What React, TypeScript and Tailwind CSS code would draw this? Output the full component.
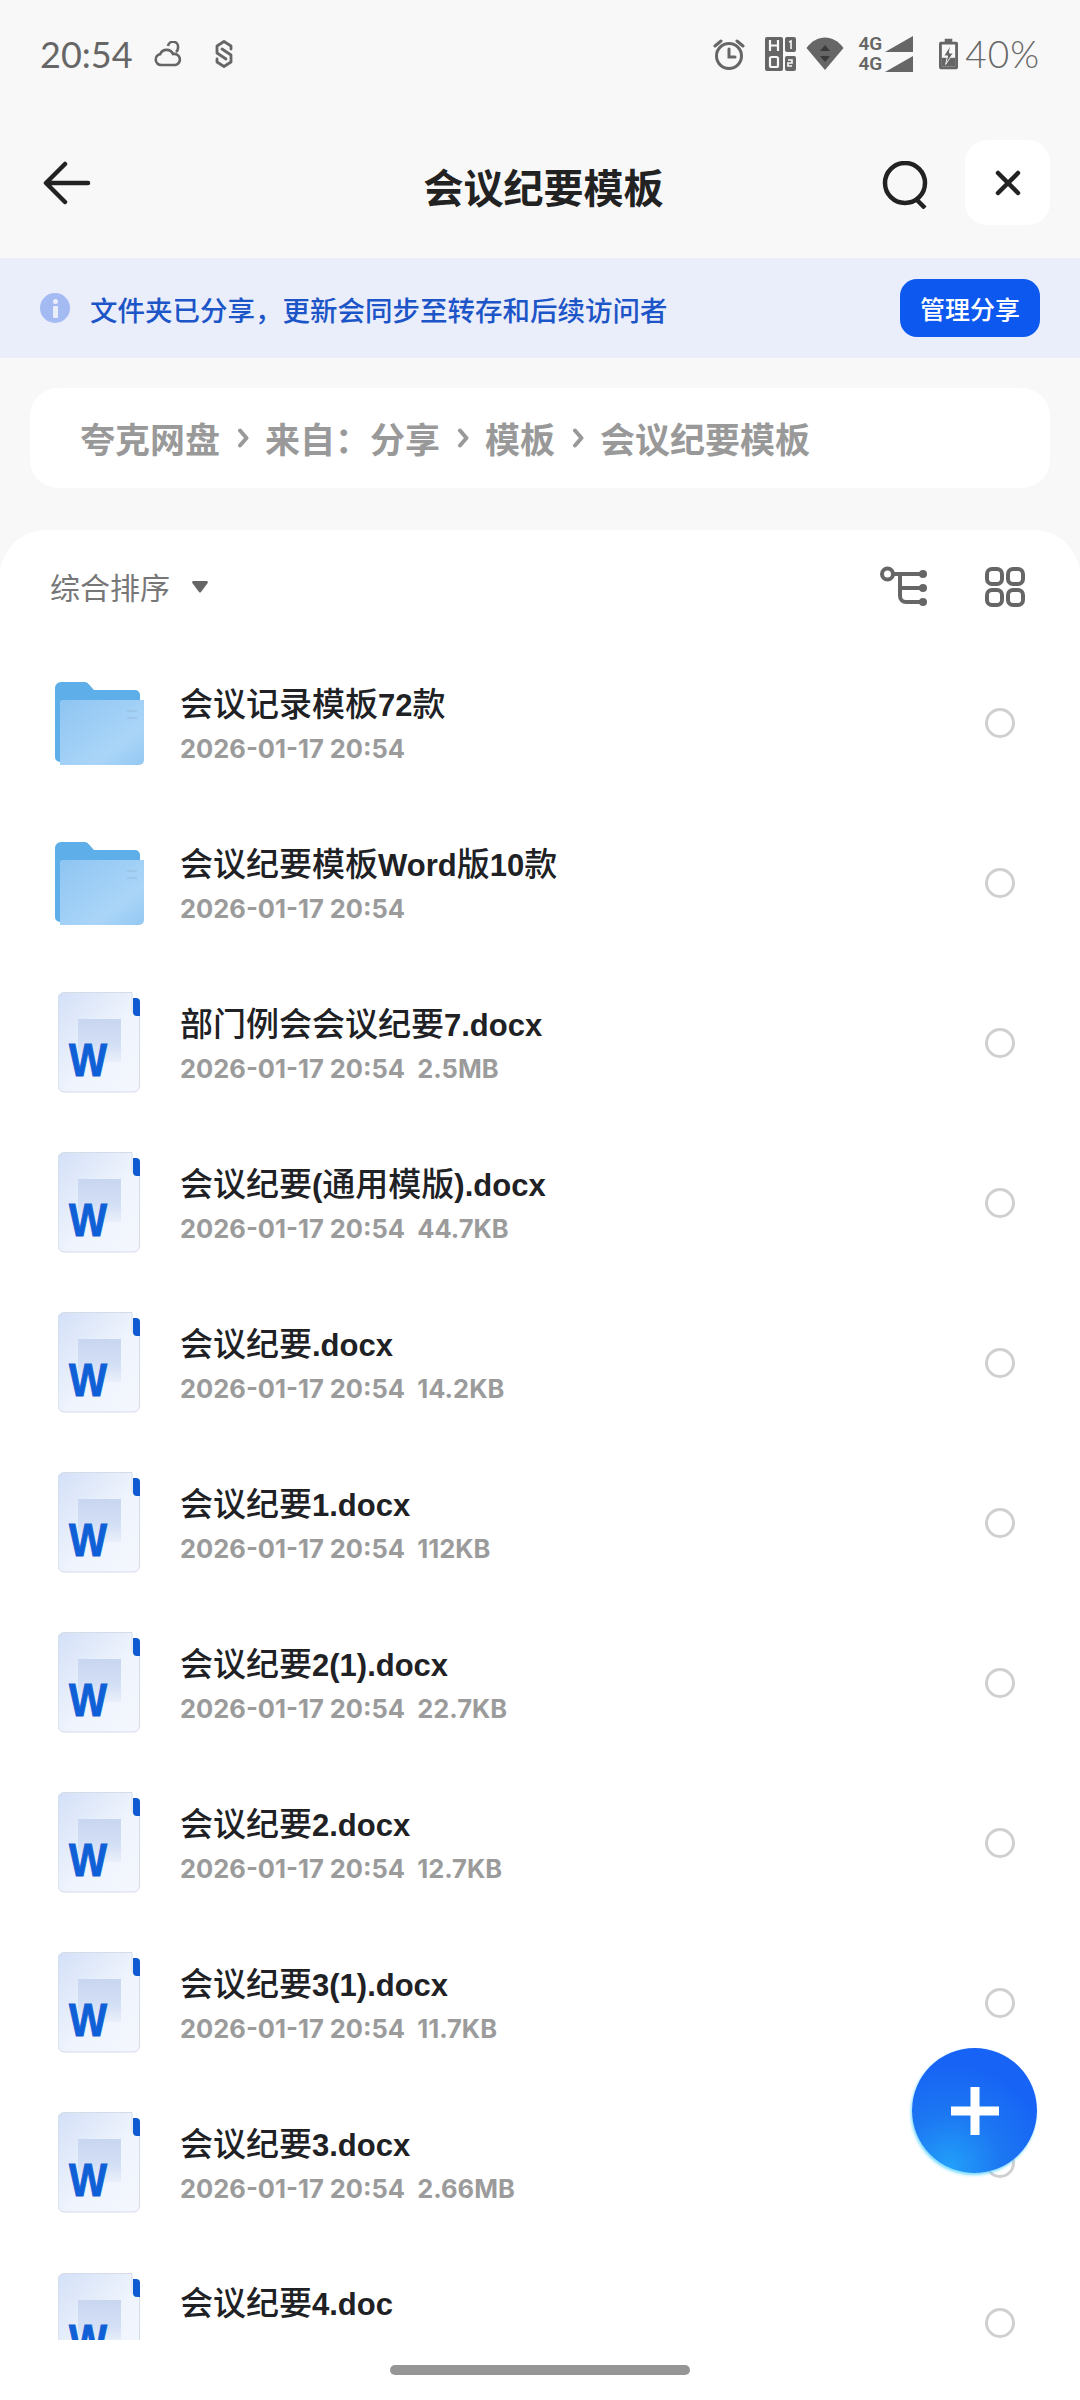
const cjk = '"Noto Sans CJK SC","Noto Sans",sans-serif';

function WordIcon() {
  return (
    <svg width="84" height="102" viewBox="0 0 84 102" className="shrink-0">
      <defs>
        <linearGradient id="wg" x1="0" y1="0" x2="1" y2="1">
          <stop offset="0" stopColor="#d3e0f7" />
          <stop offset="0.55" stopColor="#eff4fd" />
          <stop offset="1" stopColor="#f4f7fd" />
        </linearGradient>
        <linearGradient id="wi" x1="0" y1="0" x2="0" y2="1">
          <stop offset="0" stopColor="#c9d6f0" />
          <stop offset="0.6" stopColor="#d3dff5" />
          <stop offset="1" stopColor="#eaf0fb" />
        </linearGradient>
      </defs>
      <path d="M6 .5H74V20H81.500V94a6 6 0 0 1-6 6H6a6 6 0 0 1-6-6V6.500a6 6 0 0 1 6-6Z" fill="url(#wg)" stroke="#d5dce8" strokeWidth="1" />
      <rect x="20" y="27" width="43" height="43" fill="url(#wi)" />
      <path d="M75 6h3a4 4 0 0 1 4 4v14h-3a4 4 0 0 1-4-4Z" fill="#0f5ad2" />
      <text x="11" y="84" fontFamily="Liberation Sans, sans-serif" fontWeight="700" fontSize="46" fill="#0f5fd6" stroke="#0f5fd6" strokeWidth="1" textLength="38" lengthAdjust="spacingAndGlyphs">W</text>
    </svg>
  );
}

function FolderIcon() {
  return (
    <svg width="90" height="84" viewBox="0 0 90 84" className="shrink-0">
      <defs>
        <linearGradient id="fg" x1="0" y1="0" x2="1" y2="1">
          <stop offset="0" stopColor="#8fc5f2" />
          <stop offset="0.7" stopColor="#aad5f8" />
          <stop offset="1" stopColor="#93c8f2" />
        </linearGradient>
      </defs>
      <path d="M6 0H30a5 5 0 0 1 4 2.500L39 8H80a5 5 0 0 1 5 5V80H5a5 5 0 0 1-5-5V6a6 6 0 0 1 6-6Z" fill="#5eaeea" />
      <path d="M5 21a3 3 0 0 1 3-3H89V78a5 5 0 0 1-5 5H5Z" fill="url(#fg)" />
      <rect x="72" y="28" width="10" height="2" fill="#9cc6ea" />
      <rect x="72" y="35" width="10" height="2" fill="#9cc6ea" />
    </svg>
  );
}

function Name({ text }: { text: string }) {
  const parts = text.split(/([\x20-\x7e]+)/).filter(Boolean);
  return (
    <>
      {parts.map((p, i) =>
        /^[\x20-\x7e]+$/.test(p) ? (
          <span key={i} className="font-bold text-[31px] font-['Liberation_Sans',sans-serif]">{p}</span>
        ) : (
          <span key={i}>{p}</span>
        ),
      )}
    </>
  );
}

type Item = { name: string; size?: string; kind: 'folder' | 'word' };
const items: Item[] = [
  { name: '会议记录模板72款', kind: 'folder' },
  { name: '会议纪要模板Word版10款', kind: 'folder' },
  { name: '部门例会会议纪要7.docx', size: '2.5MB', kind: 'word' },
  { name: '会议纪要(通用模版).docx', size: '44.7KB', kind: 'word' },
  { name: '会议纪要.docx', size: '14.2KB', kind: 'word' },
  { name: '会议纪要1.docx', size: '112KB', kind: 'word' },
  { name: '会议纪要2(1).docx', size: '22.7KB', kind: 'word' },
  { name: '会议纪要2.docx', size: '12.7KB', kind: 'word' },
  { name: '会议纪要3(1).docx', size: '11.7KB', kind: 'word' },
  { name: '会议纪要3.docx', size: '2.66MB', kind: 'word' },
];

function Row({ item }: { item: Item }) {
  return (
    <div className="h-[160px] flex items-center pl-[55px] pr-[65px]">
      <div className={item.kind === 'folder' ? 'w-[125px] shrink-0 flex items-center pt-[2px]' : 'w-[125px] shrink-0 flex items-center'}>
        {item.kind === 'folder' ? <FolderIcon /> : <div className="ml-[3px]"><WordIcon /></div>}
      </div>
      <div className="flex-1 min-w-0 flex flex-col pt-[5px]">
        <div className="h-[44px] leading-[44px] text-[33px] font-medium text-[#202124]"><Name text={item.name} /></div>
        <div className="h-[44px] mt-[3px] leading-[44px] text-[25.500px] font-bold text-[#9b9b9b] whitespace-pre font-['Inter',sans-serif]">
          {'2026-01-17 20:54' + (item.size ? '  ' + item.size : '')}
        </div>
      </div>
      <div className="w-[30px] h-[30px] rounded-full border-[3px] border-[#d0d0d0] shrink-0" />
    </div>
  );
}

function Chevron() {
  return (
    <svg width="12" height="20" viewBox="0 0 12 20" fill="none" stroke="#999" strokeWidth="4" strokeLinecap="round" strokeLinejoin="round">
      <path d="M3 2.500l6.500 7.500-6.500 7.500" />
    </svg>
  );
}

export default function App() {
  return (
    <div className="w-[1080px] h-[2400px] bg-[#f8f8f8] overflow-hidden relative flex flex-col" style={{ fontFamily: cjk }}>
      {/* status bar */}
      <div className="h-[107px] flex items-center pl-[40px] pr-[40px] text-[#666] shrink-0">
        <span className="text-[36px] font-['Lato',sans-serif] leading-none">20:54</span>
        <svg width="28" height="26" viewBox="0 0 28 26" className="ml-[21px]" fill="none" stroke="#666" strokeWidth="2.600">
          <path d="M7 24a5.500 5.500 0 0 1-.8-10.900A7 7 0 0 1 19 13a5.500 5.500 0 0 1 2.500 11Z" />
          <path d="M14 5A5 5 0 0 1 24 6.500a5 5 0 0 1-2 4.500" />
        </svg>
        <svg width="24" height="30" viewBox="0 0 24 30" className="ml-[30px]" fill="none" stroke="#666" strokeWidth="2.800" strokeLinejoin="round" strokeLinecap="round">
          <path d="M19 10V7L12 2.500 5 7v7l9 6" />
          <path d="M5 20v3l7 4.500 7-4.500v-7l-9-6" />
        </svg>
        <div className="flex-1" />
        <svg width="32" height="32" viewBox="0 0 32 32" fill="none" stroke="#666" strokeWidth="3" className="mr-[20px]">
          <circle cx="16" cy="18" r="12.500" />
          <path d="M16 11v8h6M2 8l6-5M30 8l-6-5" strokeLinecap="round" />
        </svg>
        <svg width="31" height="34" viewBox="0 0 31 34" className="mr-[10px]">
          <rect x="0" y="0" width="18" height="34" rx="2" fill="#666" />
          <rect x="20" y="0" width="11" height="15" rx="2" fill="#666" />
          <rect x="20" y="19" width="11" height="15" rx="2" fill="#666" />
          <path d="M5 3v11M13 3v11M5 8.500h8" stroke="#f8f8f8" strokeWidth="2.200" fill="none" />
          <rect x="5" y="20" width="8" height="10" rx="1.500" stroke="#f8f8f8" strokeWidth="2.200" fill="none" />
          <path d="M24 5l2-1v8" stroke="#f8f8f8" strokeWidth="1.600" fill="none" />
          <path d="M23 23h4v3h-4v3h4" stroke="#f8f8f8" strokeWidth="1.600" fill="none" />
        </svg>
        <svg width="38" height="33" viewBox="0 0 37 33" className="mr-[14px]">
          <path d="M0 11C10 -3 27 -3 37 11L18.500 33Z" fill="#666" />
          <path d="M18.500 8l5 6h-10Z M18.500 25l5-6h-10Z" fill="#3a3a3a" />
        </svg>
        <div className="flex flex-col text-[19px] leading-[19.500px] font-semibold font-['Roboto',sans-serif] mr-[3px]">
          <span>4G</span>
          <span>4G</span>
        </div>
        <svg width="28" height="36" viewBox="0 0 28 36" className="mr-[26px]">
          <path d="M0 16 28 0v16Z M0 36 28 20v16Z" fill="#666" />
        </svg>
        <svg width="19" height="32" viewBox="0 0 20 32" className="mr-[7px]">
          <path d="M6 0h8v3h4a2 2 0 0 1 2 2v25a2 2 0 0 1-2 2H2a2 2 0 0 1-2-2V5a2 2 0 0 1 2-2h4Z" fill="#666" />
          <rect x="3" y="6" width="14" height="23" fill="#f8f8f8" />
          <rect x="3" y="20" width="14" height="9" fill="#666" />
          <path d="M12 7 5 18h4l-2 9 8-12h-4Z" fill="#666" stroke="#f8f8f8" strokeWidth="1" />
        </svg>
        <span className="text-[37px] font-['Lato',sans-serif] font-light leading-none tracking-[1px]">40%</span>
      </div>

      {/* title bar */}
      <div className="h-[151px] shrink-0 relative flex items-center justify-center pl-[7px] pt-[6px]">
        <svg width="48" height="44" viewBox="0 0 48 44" fill="none" stroke="#222" strokeWidth="4.500" strokeLinecap="round" strokeLinejoin="round" className="absolute left-[43px] top-[54px]">
          <path d="M45 22H4M22 3 3 22l19 19" />
        </svg>
        <span className="text-[40px] font-bold text-[#222] leading-none">会议纪要模板</span>
        <svg width="48" height="48" viewBox="0 0 48 48" fill="none" stroke="#222" strokeWidth="4.500" className="absolute left-[882px] top-[54px]">
          <circle cx="23" cy="22" r="20" />
          <path d="M34 38l9 9" />
        </svg>
        <div className="absolute left-[965px] top-[33px] w-[85px] h-[85px] rounded-[22px] bg-white flex items-center justify-center">
          <svg width="26" height="26" viewBox="0 0 26 26" fill="none" stroke="#222" strokeWidth="4.500" strokeLinecap="round">
            <path d="M3 3l20 20M23 3 3 23" />
          </svg>
        </div>
      </div>

      {/* share banner */}
      <div className="h-[100px] shrink-0 bg-[#eaedfa] flex items-center pl-[40px] pr-[40px]">
        <div className="w-[30px] h-[30px] rounded-full bg-[#a3baf3] flex items-center justify-center">
          <div className="flex flex-col items-center gap-[2px]">
            <div className="w-[5px] h-[5px] rounded-full bg-[#eaedfa]" />
            <div className="w-[5px] h-[12px] rounded-[1px] bg-[#eaedfa]" />
          </div>
        </div>
        <span className="ml-[20px] pt-[3px] text-[27.500px] font-medium text-[#1c55c7] flex-1">文件夹已分享，更新会同步至转存和后续访问者</span>
        <div className="w-[140px] h-[58px] pt-[2px] rounded-[17px] bg-[#0d58ef] text-white text-[25px] font-medium flex items-center justify-center">管理分享</div>
      </div>

      {/* breadcrumb */}
      <div className="h-[100px] shrink-0 mt-[30px] mx-[30px] rounded-[28px] bg-white flex items-center pl-[50px] text-[35px] font-bold text-[#999] gap-[16.500px]">
        <span>夸克网盘</span>
        <Chevron />
        <span>来自：分享</span>
        <Chevron />
        <span>模板</span>
        <Chevron />
        <span>会议纪要模板</span>
      </div>

      {/* list */}
      <div className="mt-[42px] flex-1 rounded-t-[46px] bg-white flex flex-col">
        <div className="h-[113px] flex items-center pl-[50px] pr-[55px] shrink-0">
          <span className="text-[30px] text-[#777]">综合排序</span>
          <svg width="16" height="12" viewBox="0 0 16 12" className="ml-[22px]"><path d="M1.500 0h13a1.300 1.300 0 0 1 1 2.200L9 11a1.300 1.300 0 0 1-2 0L.5 2.200A1.300 1.300 0 0 1 1.500 0Z" fill="#666" /></svg>
          <div className="flex-1" />
          <svg width="48" height="42" viewBox="0 0 48 42" fill="none" stroke="#666" strokeWidth="4" className="mr-[57px]">
            <circle cx="7.500" cy="8" r="5.500" />
            <path d="M13 8H43M20 8V30a6 6 0 0 0 6 6H43M20 22H43" />
            <circle cx="43" cy="8" r="4" fill="#666" stroke="none" />
            <circle cx="43" cy="22" r="4" fill="#666" stroke="none" />
            <circle cx="43" cy="36" r="4" fill="#666" stroke="none" />
          </svg>
          <svg width="40" height="40" viewBox="0 0 40 40" fill="none" stroke="#666" strokeWidth="4">
            <rect x="2" y="2" width="15" height="15" rx="5" />
            <rect x="23" y="2" width="15" height="15" rx="5" />
            <rect x="2" y="23" width="15" height="15" rx="5" />
            <rect x="23" y="23" width="15" height="15" rx="5" />
          </svg>
        </div>
        <div className="flex flex-col">
          {items.map((it) => <Row key={it.name} item={it} />)}
        </div>
        <div className="h-[97px] overflow-hidden flex items-start pl-[58px] pr-[65px] shrink-0">
          <div className="w-[122px] h-[97px] shrink-0 overflow-hidden pt-[30px]"><WordIcon /></div>
          <div className="text-[33px] font-medium text-[#202124] leading-[44px] mt-[36px] flex-1"><Name text="会议纪要4.doc" /></div>
          <div className="w-[30px] h-[30px] rounded-full border-[3px] border-[#d0d0d0] shrink-0 mt-[65px]" />
        </div>
        <div className="flex-1 flex items-start justify-center pt-[25px]">
          <div className="w-[300px] h-[10px] rounded-full bg-[#969696]" />
        </div>
      </div>

      {/* FAB */}
      <div className="absolute left-[912px] top-[2048px] w-[125px] h-[125px] rounded-full bg-[radial-gradient(circle_at_30%_95%,#22a0fa_0%,#1c78f2_35%,#1763f5_70%)] shadow-[-1px_2px_3px_rgba(80,210,255,0.8)] flex items-center justify-center">
        <svg width="48" height="48" viewBox="0 0 48 48" stroke="#fff" strokeWidth="9" fill="none"><path d="M24 0v48M0 24h48" /></svg>
      </div>
    </div>
  );
}
